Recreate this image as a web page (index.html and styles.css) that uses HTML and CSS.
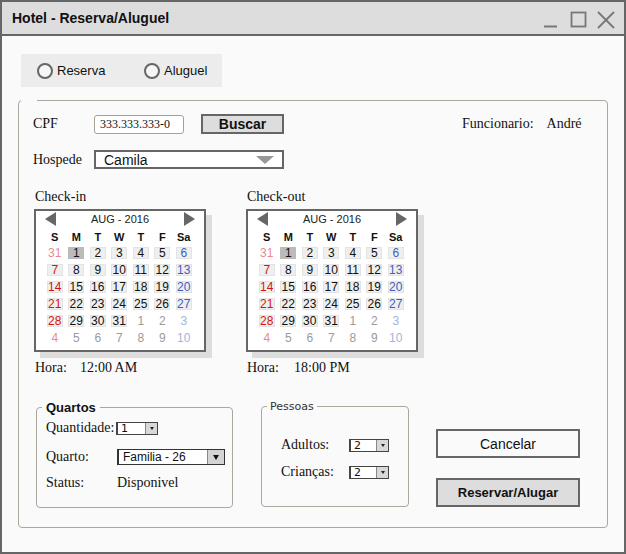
FILE: index.html
```html
<!DOCTYPE html>
<html>
<head>
<meta charset="utf-8">
<link rel="stylesheet" href="styles.css">
</head>
<body>
<div class="window">
  <div class="titlebar">
    <span class="title">Hotel - Reserva/Aluguel</span>
    <svg class="winctl" width="76" height="32" viewBox="0 0 76 32">
      <line x1="4" y1="24.5" x2="17" y2="24.5" stroke="#777" stroke-width="2"/>
      <rect x="31.5" y="10.5" width="14" height="14" fill="none" stroke="#777" stroke-width="1.8"/>
      <line x1="58" y1="10" x2="74" y2="26" stroke="#777" stroke-width="1.8"/>
      <line x1="74" y1="10" x2="58" y2="26" stroke="#777" stroke-width="1.8"/>
    </svg>
  </div>
  <div class="content">
    <div class="radios">
      <label class="radio radio-first"><span class="circle"></span>Reserva</label>
      <label class="radio"><span class="circle"></span>Aluguel</label>
    </div>
    <fieldset class="panel">
      <legend class="panel-gap"></legend>
      <div class="row row-cpf">
        <span class="lbl">CPF</span>
        <div class="cpf-input">333.333.333-0</div>
        <div class="btn-buscar">Buscar</div>
        <span class="func">Funcionario:</span>
        <span class="func-name">André</span>
      </div>
      <div class="row row-hosp">
        <span class="lbl">Hospede</span>
        <div class="select-big"><span>Camila</span><span class="tri-big"></span></div>
      </div>
      <div class="row-cal">
        <div class="cal-col cal-col-first">
          <div class="cal-label">Check-in</div>
          <div class="cal">
            <div class="cal-head"><span class="arrow-l"></span><span class="cal-title">AUG - 2016</span><span class="arrow-r"></span></div>
            <div class="cal-dow"><span>S</span><span>M</span><span>T</span><span>W</span><span>T</span><span>F</span><span>Sa</span></div>
            <div class="cal-grid">
              <span class="d sun o">31</span><span class="d sel">1</span><span class="d c">2</span><span class="d c">3</span><span class="d c">4</span><span class="d c">5</span><span class="d c sat">6</span>
              <span class="d c sun">7</span><span class="d c">8</span><span class="d c">9</span><span class="d c">10</span><span class="d c">11</span><span class="d c">12</span><span class="d c sat">13</span>
              <span class="d c sun">14</span><span class="d c">15</span><span class="d c">16</span><span class="d c">17</span><span class="d c">18</span><span class="d c">19</span><span class="d c sat">20</span>
              <span class="d c sun">21</span><span class="d c">22</span><span class="d c">23</span><span class="d c">24</span><span class="d c">25</span><span class="d c">26</span><span class="d c sat">27</span>
              <span class="d c sun">28</span><span class="d c">29</span><span class="d c">30</span><span class="d c">31</span><span class="d o">1</span><span class="d o">2</span><span class="d sat o">3</span>
              <span class="d sun o">4</span><span class="d o">5</span><span class="d o">6</span><span class="d o">7</span><span class="d o">8</span><span class="d o">9</span><span class="d sat o">10</span>
            </div>
          </div>
          <div class="hora"><span class="hl">Hora:</span>12:00 AM</div>
        </div>
        <div class="cal-col">
          <div class="cal-label">Check-out</div>
          <div class="cal">
            <div class="cal-head"><span class="arrow-l"></span><span class="cal-title">AUG - 2016</span><span class="arrow-r"></span></div>
            <div class="cal-dow"><span>S</span><span>M</span><span>T</span><span>W</span><span>T</span><span>F</span><span>Sa</span></div>
            <div class="cal-grid">
              <span class="d sun o">31</span><span class="d sel">1</span><span class="d c">2</span><span class="d c">3</span><span class="d c">4</span><span class="d c">5</span><span class="d c sat">6</span>
              <span class="d c sun">7</span><span class="d c">8</span><span class="d c">9</span><span class="d c">10</span><span class="d c">11</span><span class="d c">12</span><span class="d c sat">13</span>
              <span class="d c sun">14</span><span class="d c">15</span><span class="d c">16</span><span class="d c">17</span><span class="d c">18</span><span class="d c">19</span><span class="d c sat">20</span>
              <span class="d c sun">21</span><span class="d c">22</span><span class="d c">23</span><span class="d c">24</span><span class="d c">25</span><span class="d c">26</span><span class="d c sat">27</span>
              <span class="d c sun">28</span><span class="d c">29</span><span class="d c">30</span><span class="d c">31</span><span class="d o">1</span><span class="d o">2</span><span class="d sat o">3</span>
              <span class="d sun o">4</span><span class="d o">5</span><span class="d o">6</span><span class="d o">7</span><span class="d o">8</span><span class="d o">9</span><span class="d sat o">10</span>
            </div>
          </div>
          <div class="hora"><span class="hl hl-wide">Hora:</span>18:00 PM</div>
        </div>
      </div>
      <div class="row-bottom">
        <fieldset class="quartos">
          <legend class="q-leg">Quartos</legend>
          <div class="fs-row">
            <span class="fs-lbl">Quantidade:</span>
            <div class="sel-sm sel-qty"><span class="v">1</span><span class="b"><span class="tri-sm"></span></span></div>
          </div>
          <div class="fs-row fs-row-quarto">
            <span class="fs-lbl fs-lbl-q">Quarto:</span>
            <div class="sel-room"><span class="v">Familia - 26</span><span class="b"><span class="tri-md"></span></span></div>
          </div>
          <div class="fs-row fs-row-status">
            <span class="fs-lbl fs-lbl-q">Status:</span>
            <span>Disponivel</span>
          </div>
        </fieldset>
        <fieldset class="pessoas">
          <legend class="p-leg">Pessoas</legend>
          <div class="fs-row">
            <span class="fs-lbl2">Adultos:</span>
            <div class="sel-sm"><span class="v">2</span><span class="b"><span class="tri-sm"></span></span></div>
          </div>
          <div class="fs-row fs-row-cri">
            <span class="fs-lbl2">Crianças:</span>
            <div class="sel-sm"><span class="v">2</span><span class="b"><span class="tri-sm"></span></span></div>
          </div>
        </fieldset>
        <div class="btn-col">
          <div class="btn btn-cancel">Cancelar</div>
          <div class="btn btn-ok">Reservar/Alugar</div>
        </div>
      </div>
    </fieldset>
  </div>
</div>
</body>
</html>
```
FILE: styles.css
```css
html, body { margin: 0; padding: 0; background: #fff; }

.window {
  width: 626px;
  height: 554px;
  box-sizing: border-box;
  border: 2px solid #666;
  background: #fafafa;
  font-family: "Liberation Serif", "Times New Roman", serif;
  color: #111;
}

.titlebar {
  height: 34px;
  box-sizing: border-box;
  background: #ddd;
  border-bottom: 2px solid #666;
  display: flex;
  align-items: center;
  justify-content: space-between;
  padding: 0 8px 0 10px;
}
.title {
  font: bold 14px "Liberation Sans", Arial, sans-serif;
  color: #111;
}
.winctl { display: block; }

.content { padding: 18px 0 0 16px; }

.radios {
  display: flex;
  align-items: center;
  width: 201px;
  height: 33px;
  box-sizing: border-box;
  background: #ececec;
  margin-left: 3px;
  padding-left: 16px;
}
.radio {
  display: flex;
  align-items: center;
  font: 13px "Liberation Sans", Arial, sans-serif;
  color: #111;
}
.radio-first { width: 107px; }
.circle {
  width: 16px;
  height: 16px;
  box-sizing: border-box;
  border: 2px solid #666;
  border-radius: 50%;
  margin-right: 4px;
  background: #f6f6f6;
}

.panel {
  margin: 13px 0 0 0;
  width: 590px;
  box-sizing: border-box;
  border: 1px solid #aaa89c;
  border-radius: 4px;
  padding: 13px 0 19px 0;
  min-width: 0;
}
.panel-gap {
  width: 16px;
  height: 0;
  padding: 0;
  margin-left: 2px;
}

.row { display: flex; align-items: center; }
.row-cpf { height: 20px; padding-left: 14px; }
.row-hosp { height: 19px; padding-left: 14px; margin-top: 16px; }
.lbl { font-size: 14px; width: 61px; }
.cpf-input {
  width: 90px;
  height: 19px;
  box-sizing: border-box;
  border: 1px solid #a89f95;
  border-radius: 3px;
  background: #fff;
  font-size: 12px;
  line-height: 17px;
  padding-left: 5px;
}
.btn-buscar {
  margin-left: 17px;
  width: 83px;
  height: 20px;
  box-sizing: border-box;
  border: 2px solid #666;
  background: #ddd;
  font: bold 14px "Liberation Sans", Arial, sans-serif;
  text-align: center;
  line-height: 16px;
}
.func { margin-left: 178px; font-size: 14px; }
.func-name { margin-left: 13px; font-size: 14px; }

.select-big {
  width: 190px;
  height: 19px;
  box-sizing: border-box;
  border: 2px solid #666;
  background: #fff;
  display: flex;
  align-items: center;
  justify-content: space-between;
  padding: 0 8px;
  font: 14px "Liberation Sans", Arial, sans-serif;
}
.tri-big {
  width: 0;
  height: 0;
  border-left: 9px solid transparent;
  border-right: 9px solid transparent;
  border-top: 8px solid #999;
}

.row-cal { display: flex; margin-top: 20px; padding-left: 15px; }
.cal-col-first { width: 212px; }
.cal-label { font-size: 14px; line-height: 16px; padding-left: 1px; }
.cal {
  margin-top: 4px;
  width: 172px;
  box-sizing: border-box;
  border: 2px solid #666;
  background: #fff;
  box-shadow: 6px 6px 0 #ddd;
}
.cal-head {
  height: 18px;
  box-sizing: border-box;
  display: flex;
  justify-content: space-between;
  align-items: flex-start;
  padding: 1px 9px 0 9px;
}
.arrow-l {
  width: 0; height: 0;
  border-top: 7.5px solid transparent;
  border-bottom: 7.5px solid transparent;
  border-right: 11px solid #666;
}
.arrow-r {
  width: 0; height: 0;
  border-top: 7.5px solid transparent;
  border-bottom: 7.5px solid transparent;
  border-left: 11px solid #666;
}
.cal-title {
  font: 11px "Liberation Sans", Arial, sans-serif;
  line-height: 13px;
  color: #222;
  margin-top: 1px;
}
.cal-dow {
  display: grid;
  grid-template-columns: repeat(7, 21.5px);
  padding-left: 8px;
  height: 15px;
  align-items: center;
  text-align: center;
  font: bold 11px "Liberation Sans", Arial, sans-serif;
  color: #111;
}
.cal-grid {
  display: grid;
  grid-template-columns: repeat(7, 21.5px);
  grid-auto-rows: 17px;
  padding: 0 0 4px 8px;
  align-items: center;
  justify-items: center;
  font: 12px "Liberation Sans", Arial, sans-serif;
  color: #111;
}
.d {
  width: 16px;
  height: 12px;
  line-height: 12px;
  text-align: center;
}
.d.c { background: #efefef; box-shadow: inset 0 0 0 1px #e3e3e3; }
.d.sel { background: #bbb; }
.d.o { color: #9a9a9a; }
.d.sun { color: #d41414; }
.d.sun.o { color: #ec8a8a; }
.d.sat { color: #3d5fbf; }
.d.sat.o { color: #a3b4dc; }

.hora { margin-top: 8px; font-size: 14px; line-height: 16px; padding-left: 1px; }
.hl { display: inline-block; width: 45px; }
.hl-wide { width: 47px; }

.row-bottom {
  display: flex;
  align-items: flex-start;
  margin-top: 24px;
  padding-left: 17px;
}
.quartos, .pessoas {
  margin: 0;
  box-sizing: border-box;
  border: 1px solid #aaa89c;
  border-radius: 4px;
  min-width: 0;
}
.quartos { width: 197px; height: 108px; padding: 3px 0 0 9px; }
.pessoas { width: 148px; height: 107px; padding: 22px 0 0 19px; margin-left: 28px; }
.q-leg {
  font: bold 13px "Liberation Sans", Arial, sans-serif;
  line-height: 15px;
  padding: 0 4px;
  margin-left: -4px;
  color: #111;
}
.p-leg {
  font: 11px "DejaVu Sans", Verdana, sans-serif;
  line-height: 13px;
  padding: 0 3px;
  margin-left: -14px;
  color: #333;
}
.fs-row { display: flex; align-items: center; height: 20px; font-size: 14px; }
.fs-row-quarto { margin-top: 9px; }
.fs-row-status { margin-top: 6px; }
.fs-row-cri { margin-top: 7px; }
.fs-lbl { width: 70px; }
.fs-lbl-q { width: 71px; }
.fs-lbl2 { width: 68px; }

.sel-sm {
  width: 40px;
  height: 13px;
  box-sizing: border-box;
  border: 1px solid #444;
  border-left-width: 2px;
  background: #fff;
  display: flex;
  font: 11px "DejaVu Sans", Verdana, sans-serif;
}
.sel-qty { width: 42px; }
.sel-sm .v { flex: 1; padding-left: 3px; line-height: 11px; }
.sel-sm .b {
  width: 11px;
  background: #d8d8d8;
  border-left: 1px solid #888;
  display: flex;
  align-items: center;
  justify-content: center;
}
.tri-sm {
  width: 0; height: 0;
  border-left: 2.5px solid transparent;
  border-right: 2.5px solid transparent;
  border-top: 3px solid #222;
}
.sel-room {
  width: 108px;
  height: 16px;
  box-sizing: border-box;
  border: 1px solid #333;
  border-left-width: 2px;
  background: #fff;
  display: flex;
  font: 12px "Liberation Sans", Arial, sans-serif;
}
.sel-room .v { flex: 1; padding-left: 4px; line-height: 14px; }
.sel-room .b {
  width: 16px;
  background: #d4d4d4;
  border-left: 1px solid #888;
  display: flex;
  align-items: center;
  justify-content: center;
}
.tri-md {
  width: 0; height: 0;
  border-left: 3.5px solid transparent;
  border-right: 3.5px solid transparent;
  border-top: 5px solid #111;
}

.btn-col { margin-left: 27px; }
.btn {
  width: 144px;
  height: 29px;
  box-sizing: border-box;
  border: 2px solid #666;
  display: flex;
  align-items: center;
  justify-content: center;
  font: 14px "Liberation Sans", Arial, sans-serif;
  color: #111;
}
.btn-cancel { margin-top: 29px; background: #fafafa; }
.btn-ok { margin-top: 20px; background: #ddd; font-weight: bold; font-size: 13px; }
```
